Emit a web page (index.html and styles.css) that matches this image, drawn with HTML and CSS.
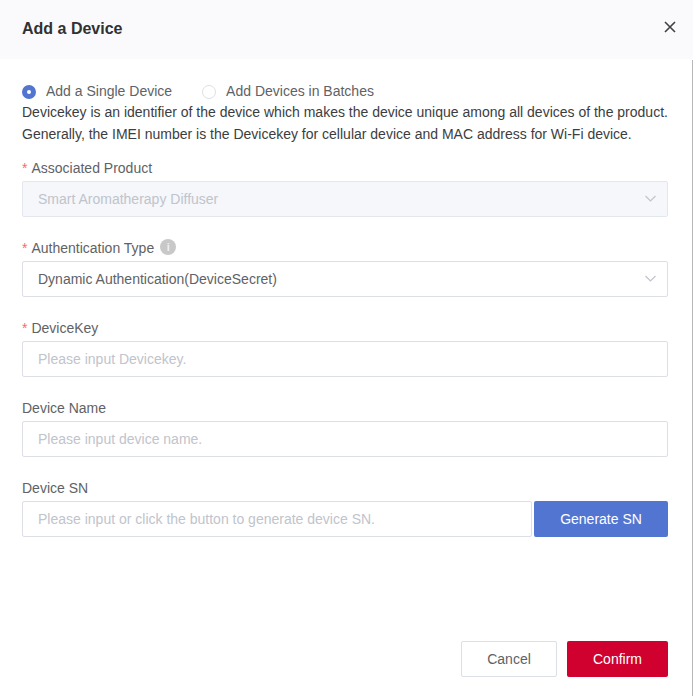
FILE: index.html
```html
<!DOCTYPE html>
<html lang="en">
<head>
<meta charset="utf-8">
<title>Add a Device</title>
<link rel="stylesheet" href="styles.css">
</head>
<body>
<div class="dialog">
  <header class="header">
    <h1>Add a Device</h1>
    <svg class="close" viewBox="0 0 12 12" width="12" height="12"><path d="M1 1l10 10M11 1L1 11"/></svg>
  </header>
  <div class="content">
    <main class="body">
      <div class="radios">
        <span class="radio"><i class="dot checked"></i>Add a Single Device</span>
        <span class="radio"><i class="dot"></i>Add Devices in Batches</span>
      </div>
      <p class="hint">Devicekey is an identifier of the device which makes the device unique among all devices of the product.<br>Generally, the IMEI number is the Devicekey for cellular device and MAC address for Wi-Fi device.</p>
      <div class="field">
        <div class="label required">Associated Product</div>
        <div class="input disabled"><span>Smart Aromatherapy Diffuser</span><svg class="arrow" viewBox="0 0 12 8" width="12" height="8"><path d="M.5 1l5 5 5-5"/></svg></div>
      </div>
      <div class="field">
        <div class="label required">Authentication Type<span class="info">i</span></div>
        <div class="input value"><span>Dynamic Authentication(DeviceSecret)</span><svg class="arrow" viewBox="0 0 12 8" width="12" height="8"><path d="M.5 1l5 5 5-5"/></svg></div>
      </div>
      <div class="field">
        <div class="label required">DeviceKey</div>
        <div class="input">Please input Devicekey.</div>
      </div>
      <div class="field">
        <div class="label">Device Name</div>
        <div class="input">Please input device name.</div>
      </div>
      <div class="field">
        <div class="label">Device SN</div>
        <div class="row">
          <div class="input">Please input or click the button to generate device SN.</div>
          <button class="btn primary">Generate SN</button>
        </div>
      </div>
    </main>
    <footer class="footer">
      <button class="btn cancel">Cancel</button>
      <button class="btn confirm">Confirm</button>
    </footer>
  </div>
</div>
</body>
</html>
```
FILE: styles.css
```css
* { box-sizing: border-box; }
body { margin: 0; background: #fff; font: 14px/22px "Liberation Sans", Arial, sans-serif; color: #606266; }
.dialog { display: flex; flex-direction: column; height: 697px; }
.header { display: flex; align-items: center; justify-content: space-between; height: 59px; flex: none; padding: 0 17px 3px 22px; background: #fafafc; }
h1 { margin: 0; padding-top: 2px; font-size: 16px; color: #303133; }
.close { margin-bottom: 2px; fill: none; stroke: #404144; stroke-width: 1.6; }
.content { display: flex; flex: 1; flex-direction: column; margin: 1px 0; border-right: 1px solid #b8b8b8; }
.body { flex: 1; padding: 20px 24px 0 22px; }
.radios { display: flex; gap: 30px; height: 21px; }
.radio { display: flex; align-items: center; gap: 10px; }
.dot { width: 14px; height: 14px; margin-top: 2px; border: 1px solid #dcdfe6; border-radius: 50%; }
.dot.checked { border: 5px solid #5375d2; }
.hint { margin: 0 -10px 0 0; color: #3c3d40; white-space: nowrap; }
.field { height: 80px; padding-top: 11px; }
.label { display: flex; align-items: center; height: 25px; padding-bottom: 1px; }
.required::before { content: "*"; color: #f56c6c; margin-right: 4px; }
.info { width: 16px; height: 16px; margin: 0 0 2px 6px; border-radius: 50%; background: #c8c8c8; color: #f0f0f0; font-size: 11px; font-weight: bold; line-height: 16px; text-align: center; }
.input { display: flex; flex: 1; align-items: center; justify-content: space-between; height: 36px; padding: 0 10px 0 15px; border: 1px solid #dcdfe6; border-radius: 2px; color: #c0c4cc; }
.disabled { background: #f5f7fa; border-color: #e4e7ed; }
.value { color: #606266; }
.arrow { margin-bottom: 1px; fill: none; stroke: #c0c4cc; stroke-width: 1.2; }
.row { display: flex; gap: 2px; }
.btn { height: 36px; padding: 0; border: 0; border-radius: 2px; font: 14px "Liberation Sans", Arial, sans-serif; color: #fff; }
.primary { width: 134px; background: #5375d2; }
.footer { display: flex; justify-content: flex-end; gap: 10px; height: 55px; padding-right: 24px; }
.cancel { width: 96px; border: 1px solid #dcdfe6; background: #fff; color: #606266; }
.confirm { width: 101px; background: #d0012f; }
```
